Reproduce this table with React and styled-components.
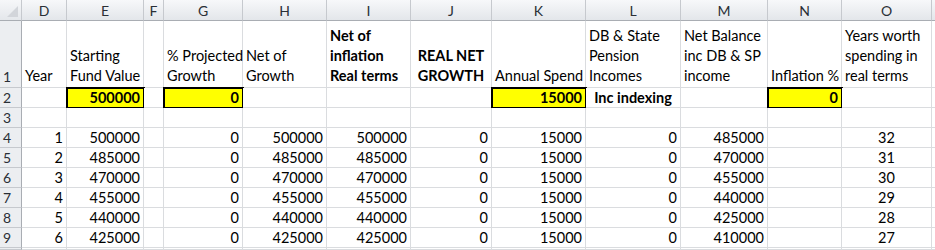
import React from "react";
import styled, { createGlobalStyle } from "styled-components";

const Global = createGlobalStyle`
  body {
    margin: 0;
    background: #fff;
  }
`;

const COLS = ["D", "E", "F", "G", "H", "I", "J", "K", "L", "M", "N", "O", "P"];
const WIDTHS = [45, 77, 20, 79, 84, 84, 81, 94, 95, 87, 74, 90, 20];

const header = {
  D: { text: "Year" },
  E: { text: "Starting\nFund Value" },
  G: { text: "% Projected\nGrowth" },
  H: { text: "Net of\nGrowth" },
  I: { text: "Net of\ninflation\nReal terms", bold: true },
  J: { text: "REAL NET\nGROWTH", bold: true, align: "center" },
  K: { text: "Annual Spend" },
  L: { text: "DB & State\nPension\nIncomes" },
  M: { text: "Net Balance\ninc DB & SP\nincome" },
  N: { text: "Inflation %" },
  O: { text: "Years worth\nspending in\nreal terms" },
};

const inputs = {
  E: { text: "500000", hl: true, bold: true, align: "right" },
  G: { text: "0", hl: true, bold: true, align: "right" },
  K: { text: "15000", hl: true, bold: true, align: "right" },
  L: { text: "Inc indexing", bold: true, align: "center" },
  N: { text: "0", hl: true, bold: true, align: "right" },
};

function dataRow(i) {
  const start = 500000 - 15000 * i;
  return {
    D: { text: String(i + 1), align: "right" },
    E: { text: String(start), align: "right" },
    G: { text: "0", align: "right" },
    H: { text: String(start), align: "right" },
    I: { text: String(start), align: "right" },
    J: { text: "0", align: "right" },
    K: { text: "15000", align: "right" },
    L: { text: "0", align: "right" },
    M: { text: String(start - 15000), align: "right" },
    O: { text: String(32 - i), align: "center" },
  };
}

// the last row is only a sliver at the bottom edge, so it carries no text
const rows = [
  { n: 1, tall: true, cells: header },
  { n: 2, cells: inputs },
  { n: 3, cells: {} },
  ...[0, 1, 2, 3, 4, 5].map((i) => ({ n: i + 4, cells: dataRow(i) })),
  { n: "", cells: {} },
];

function App() {
  return (
    <>
      <Global />
      <Sheet>
        <Corner>
          <CornerMark />
        </Corner>
        {COLS.map((c) => (
          <ColHead key={c}>{c === "P" ? "" : c}</ColHead>
        ))}
        {rows.map((r, idx) => (
          <React.Fragment key={idx}>
            <RowHead $tall={r.tall}>{r.n}</RowHead>
            {COLS.map((c) => {
              const cell = r.cells[c] || {};
              return (
                <Cell
                  key={c}
                  $tall={r.tall}
                  $align={cell.align}
                  $bold={cell.bold}
                  $hl={cell.hl}
                >
                  {cell.text}
                </Cell>
              );
            })}
          </React.Fragment>
        ))}
      </Sheet>
    </>
  );
}

const Sheet = styled.div`
  display: grid;
  grid-template-columns: 22px ${WIDTHS.map((w) => w + "px").join(" ")};
  grid-template-rows: 21px 67px repeat(8, 20px) 2px;
  width: 935px;
  height: 250px;
  overflow: hidden;
  font-family: Lato, "Open Sans", sans-serif;
  font-size: 14.5px;
  color: #000;
`;

const Corner = styled.div`
  position: relative;
  background: linear-gradient(#f6f7f9, #e4e7eb);
  border-right: 1px solid #c6c9ce;
  border-bottom: 1px solid #a9adb3;
  box-sizing: border-box;
`;

const CornerMark = styled.div`
  position: absolute;
  right: 3px;
  bottom: 3px;
  width: 0;
  height: 0;
  border-left: 11px solid transparent;
  border-bottom: 11px solid #d2d5da;
`;

const ColHead = styled.div`
  display: flex;
  align-items: center;
  justify-content: center;
  background: linear-gradient(#f7f8fa, #e3e6ea);
  border-right: 1px solid #c6c9ce;
  border-bottom: 1px solid #a9adb3;
  box-sizing: border-box;
  color: #2a2f36;
  font-size: 14px;
`;

const RowHead = styled.div`
  display: flex;
  align-items: ${(p) => (p.$tall ? "flex-end" : "center")};
  padding: 0 0 ${(p) => (p.$tall ? "2px" : "0")} 3px;
  background: #eceef1;
  border-right: 1px solid #a9adb3;
  border-bottom: 1px solid #c6c9ce;
  box-sizing: border-box;
  color: #2a2f36;
  font-size: 14px;
`;

const Cell = styled.div`
  display: flex;
  align-items: ${(p) => (p.$tall ? "flex-end" : "center")};
  justify-content: ${(p) =>
    p.$align === "right" ? "flex-end" : p.$align === "center" ? "center" : "flex-start"};
  text-align: ${(p) => p.$align || "left"};
  padding: 0 3px ${(p) => (p.$tall ? "1px" : "0")} 3px;
  white-space: pre;
  line-height: 20px;
  font-weight: ${(p) => (p.$bold ? 700 : 400)};
  background: ${(p) => (p.$hl ? "#ffff00" : "#fff")};
  border-right: 1px solid #dadcdf;
  border-bottom: 1px solid #dadcdf;
  box-sizing: border-box;
  outline: ${(p) => (p.$hl ? "2px solid #000" : "none")};
  outline-offset: -1px;
`;

export default App;
